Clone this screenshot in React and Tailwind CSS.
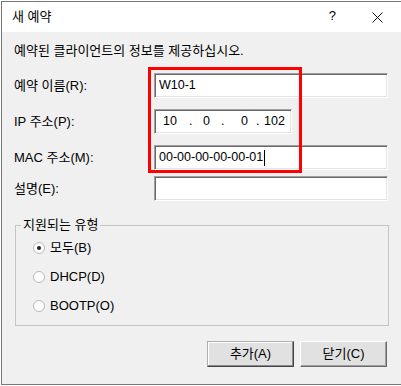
import React from 'react';

const font = { fontFamily: '"Liberation Sans", "Noto Sans CJK KR", sans-serif' };

const Field = ({ className = '', children }) => (
    <div
        className={`h-[25px] flex items-center pl-[4px] bg-white border border-t-[#a0a0a0] border-l-[#a0a0a0] border-b-white border-r-white shadow-[inset_1px_1px_0_#696969,inset_-1px_-1px_0_#e3e3e3] text-[12.5px] ${className}`}
    >
        {children}
    </div>
);

const Row = ({ label, className = '', children }) => (
    <div className={`flex items-center ${className}`}>
        <div className="w-[152px] shrink-0 text-[13px] pl-[12px]">{label}</div>
        {children}
    </div>
);

const Radio = ({ checked, label }) => (
    <div className="flex items-center h-[29px]">
        <div className="ml-[17px] w-[12px] h-[12px] rounded-full bg-white border border-[#b9b9b9] flex items-center justify-center">
            {checked && <div className="w-[4px] h-[4px] rounded-full bg-[#222]" />}
        </div>
        <span className="ml-[5px] text-[13px]">{label}</span>
    </div>
);

const Button = ({ primary, children }) => (
    <div
        className={`w-[87px] h-[26px] flex items-center justify-center bg-[#e1e1e1] text-[13px] border ${primary ? 'border-t-[#adadad] border-l-[#adadad] border-b-[#444] border-r-[#444] shadow-[inset_-1px_-1px_0_#8a8a8a,inset_1px_1px_0_#fff]' : 'border-t-[#fff] border-l-[#fff] border-b-[#696969] border-r-[#696969] shadow-[inset_-1px_-1px_0_#a0a0a0]'}`}
    >
        {children}
    </div>
);

export default function App() {
    return (
        <div className="w-[401px] h-[386px] bg-white overflow-hidden text-black" style={font}>
            <div className="relative ml-[1px] mt-[1px] w-[420px] h-[384px] border-l border-t border-b border-[#777] flex flex-col">

                {/* Title bar */}
                <div className="h-[30px] bg-white flex items-center shrink-0">
                    <span className="ml-[10px] text-[13px]">새 예약</span>
                    <span className="ml-auto text-[13px] mr-[36px] mt-[-2px]">?</span>
                    <svg width="11" height="11" viewBox="0 0 11 11" className="mr-[38px]">
                        <path d="M0.5 0.5 L10.5 10.5 M10.5 0.5 L0.5 10.5" stroke="#111" strokeWidth="1" />
                    </svg>
                </div>

                {/* Body */}
                <div className="flex-1 bg-[#f0f0f0] flex flex-col">
                    <div className="mt-[11px] pl-[12px] text-[13px] leading-[16px]">예약된 클라이언트의 정보를 제공하십시오.</div>

                    <Row label="예약 이름(R):" className="mt-[14px]">
                        <Field className="w-[234px]">W10-1</Field>
                    </Row>
                    <Row label="IP 주소(P):" className="mt-[11px]">
                        <Field className="w-[138px] h-[24px] relative">
                            <span className="absolute left-[8px]">10</span>
                            <span className="absolute left-[34px]">.</span>
                            <span className="absolute left-[48px]">0</span>
                            <span className="absolute left-[66px]">.</span>
                            <span className="absolute left-[86px]">0</span>
                            <span className="absolute left-[101px]">.</span>
                            <span className="absolute left-[109px]">102</span>
                        </Field>
                    </Row>
                    <Row label="MAC 주소(M):" className="mt-[11px]">
                        <Field className="w-[234px] pl-[3px]">
                            <span>00-00-00-00-00-01</span>
                            <span className="w-[1px] h-[16px] bg-black ml-[1px]" />
                        </Field>
                    </Row>
                    <Row label="설명(E):" className="mt-[6px]">
                        <Field className="w-[234px]" />
                    </Row>

                    <fieldset className="ml-[13px] mt-[17px] w-[374px] h-[108px] border border-[#c4c4c4] px-0">
                        <legend className="ml-[5px] px-[2px] text-[13px] leading-[14px]">지원되는 유형</legend>
                        <div className="flex flex-col mt-[1px]">
                            <Radio checked label="모두(B)" />
                            <Radio label="DHCP(D)" />
                            <Radio label="BOOTP(O)" />
                        </div>
                    </fieldset>

                    <div className="flex mt-[15px] ml-[205px] gap-[6px]">
                        <Button primary>추가(A)</Button>
                        <Button>닫기(C)</Button>
                    </div>
                </div>

                {/* highlight box */}
                <div className="absolute left-[146px] top-[65px] w-[154px] h-[106px] border-[3px] border-[#ff0000] pointer-events-none" />
            </div>
        </div>
    );
}
